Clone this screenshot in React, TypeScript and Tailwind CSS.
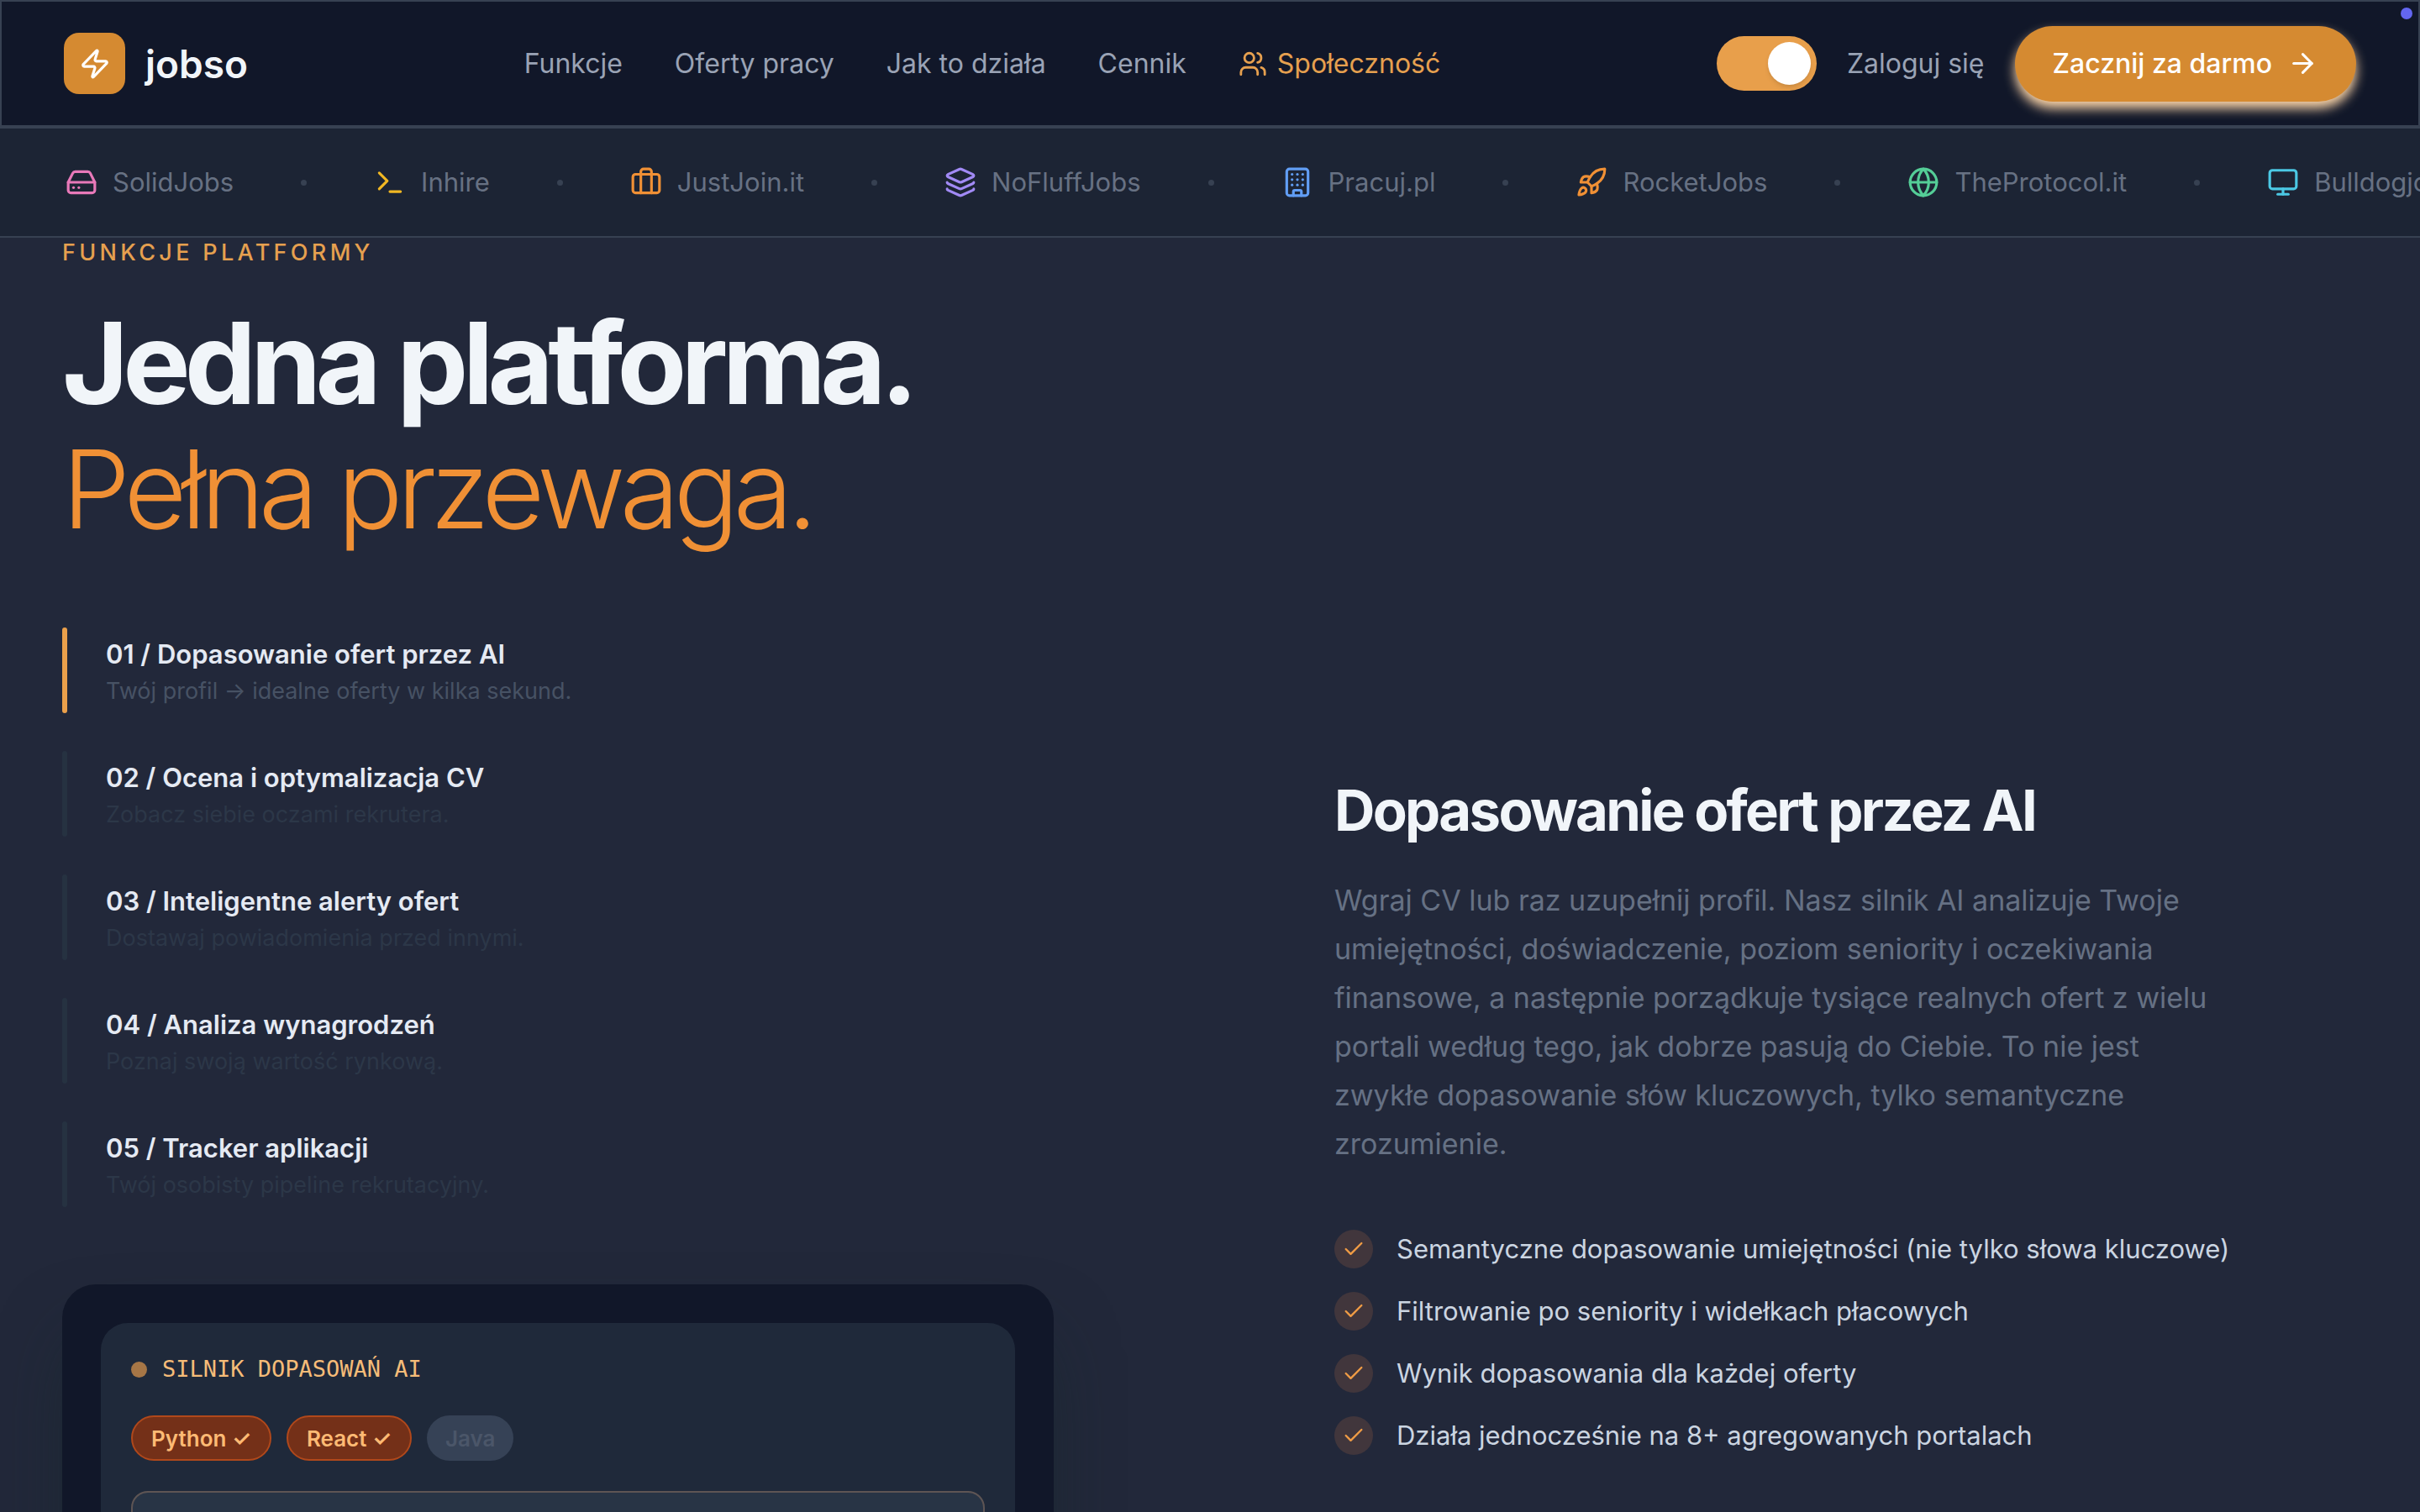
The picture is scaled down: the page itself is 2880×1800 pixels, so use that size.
import React from 'react';
import { ArrowRight, Briefcase, Building, Check, Globe, HardDrive, Layers, Monitor, Rocket, Terminal, Users, Zap } from 'lucide-react';

const navLinks = ['Funkcje', 'Oferty pracy', 'Jak to działa', 'Cennik'];

const portals = [
  { name: 'SolidJobs', icon: <HardDrive size={38} />, color: 'text-[#e879b9]' },
  { name: 'Inhire', icon: <Terminal size={38} />, color: 'text-[#f0b723]' },
  { name: 'JustJoin.it', icon: <Briefcase size={38} />, color: 'text-[#f09035]' },
  { name: 'NoFluffJobs', icon: <Layers size={38} />, color: 'text-[#a18af5]' },
  { name: 'Pracuj.pl', icon: <Building size={38} />, color: 'text-[#619ef5]' },
  { name: 'RocketJobs', icon: <Rocket size={38} />, color: 'text-[#f09035]' },
  { name: 'TheProtocol.it', icon: <Globe size={38} />, color: 'text-[#54cd97]' },
  { name: 'Bulldogjob', icon: <Monitor size={38} />, color: 'text-[#4bc8e4]' },
];

const features = [
  { title: '01 / Dopasowanie ofert przez AI', desc: 'Twój profil → idealne oferty w kilka sekund.' },
  { title: '02 / Ocena i optymalizacja CV', desc: 'Zobacz siebie oczami rekrutera.' },
  { title: '03 / Inteligentne alerty ofert', desc: 'Dostawaj powiadomienia przed innymi.' },
  { title: '04 / Analiza wynagrodzeń', desc: 'Poznaj swoją wartość rynkową.' },
  { title: '05 / Tracker aplikacji', desc: 'Twój osobisty pipeline rekrutacyjny.' },
];

const benefits = [
  'Semantyczne dopasowanie umiejętności (nie tylko słowa kluczowe)',
  'Filtrowanie po seniority i widełkach płacowych',
  'Wynik dopasowania dla każdej oferty',
  'Działa jednocześnie na 8+ agregowanych portalach',
];

const Header: React.FC = () => (
  <header className="relative flex h-[151px] items-center justify-between border-2 border-[#374152] bg-[#111729] px-[74px]">
    <a href="#" className="flex items-center gap-6">
      <span className="flex size-[73px] items-center justify-center rounded-[18px] bg-[#d58a31] text-white">
        <Zap size={38} />
      </span>
      <span className="text-[46px] leading-none font-semibold text-[#f1f5f9]">jobso</span>
    </a>

    <nav className="flex items-center gap-[62px] text-[32px] text-[#9aa3b5]">
      {navLinks.map((label) => (
        <a key={label} href="#">{label}</a>
      ))}
      <a href="#" className="flex items-center gap-3 text-[#e6a04f]">
        <Users size={34} />
        Społeczność
      </a>
    </nav>

    <div className="flex items-center gap-9">
      <input
        type="checkbox"
        role="switch"
        aria-label="Ciemny motyw"
        defaultChecked
        className="relative h-[65px] w-[119px] appearance-none rounded-full bg-[#e89f4b] before:absolute before:top-[7px] before:right-[7px] before:size-[51px] before:rounded-full before:bg-white before:shadow-md"
      />
      <a href="#" className="text-[32px] text-[#9aa3b5]">Zaloguj się</a>
      <button className="flex h-[90px] items-center gap-[18px] rounded-full bg-[#d58a31] px-[45px] text-[32px] font-medium text-white shadow-[0_8px_14px_#fed7aa]">
        Zacznij za darmo
        <ArrowRight size={37} />
      </button>
    </div>
    <span className="absolute top-[7px] right-[7px] size-[14px] rounded-full bg-[#6366f1]"></span>
  </header>
);

const Ticker: React.FC = () => (
  <div className="flex h-[132px] items-center gap-20 overflow-hidden border-y-2 border-[#374152] bg-[#1c2434] px-[78px]">
    {portals.map((portal, idx) => (
      <React.Fragment key={portal.name}>
        {idx > 0 && <span className="size-[7px] shrink-0 rounded-full bg-[#374152]"></span>}
        <span className="flex shrink-0 items-center gap-[18px] text-[31px] text-[#677183]">
          <span className={portal.color}>{portal.icon}</span>
          {portal.name}
        </span>
      </React.Fragment>
    ))}
  </div>
);

const MatchCard: React.FC = () => (
  <div className="h-[600px] max-w-[1180px] rounded-[40px] bg-[#111729] p-[46px] shadow-[0_50px_90px_-20px_rgba(20,40,40,0.6)]">
    <div className="h-full rounded-[32px] bg-[#1f293a] px-9 pt-9">
      <div className="flex items-center gap-[18px]">
        <span className="size-[19px] rounded-full bg-[#a67646]"></span>
        <span className="font-['DejaVu_Sans_Mono',monospace] text-[27px] leading-[38px] text-[#f5bc78]">SILNIK DOPASOWAŃ AI</span>
      </div>
      <div className="mt-9 flex gap-[18px] text-[26px] font-semibold">
        <span className="flex h-[54px] items-center rounded-full border-2 border-[#b0481b] bg-[#743018] px-[22px] text-[#fdba74]">Python ✓</span>
        <span className="flex h-[54px] items-center rounded-full border-2 border-[#b0481b] bg-[#743018] px-[22px] text-[#fdba74]">React ✓</span>
        <span className="flex h-[54px] items-center rounded-full bg-[#364256] px-[22px] text-[#4b5669]">Java</span>
      </div>
      <div className="mt-9 h-[300px] rounded-[20px] border-2 border-[#5e5554] bg-[#283445]"></div>
    </div>
  </div>
);

export default function App() {
  return (
    <div className="h-screen overflow-hidden bg-[#22283a] font-['Inter',sans-serif]">
      <Header />
      <Ticker />
      <main className="grid grid-cols-2 gap-[296px] px-[74px]">
        <section>
          <p className="text-[27px] leading-9 font-medium tracking-[0.16em] text-[#e6a04f] uppercase">Funkcje platformy</p>
          <h1 className="mt-[38px] text-[135px] leading-[150px] font-bold tracking-[-0.05em] whitespace-nowrap text-[#f1f5f9]">
            Jedna platforma.
            <span className="block text-[129px] font-light text-[#f09035]">Pełna przewaga.</span>
          </h1>
          <ul className="mt-[90px] flex flex-col gap-[45px]">
            {features.map((feature, idx) => (
              <li key={feature.title} className="flex h-[102px] gap-[46px]">
                <span className={`w-[6px] rounded-full ${idx === 0 ? 'bg-[#eba04b]' : 'bg-[#263241]'}`}></span>
                <button className="flex flex-col justify-end pb-1 text-left">
                  <span className="text-[31px] leading-[44px] font-semibold text-[#e5eaf3]">{feature.title}</span>
                  <span className={`text-[27px] leading-[44px] ${idx === 0 ? 'text-[#475264]' : 'text-[#2c3748]'}`}>{feature.desc}</span>
                </button>
              </li>
            ))}
          </ul>
          <div className="mt-[92px]">
            <MatchCard />
          </div>
        </section>

        <section className="pt-[640px]">
          <h2 className="text-[67px] leading-[84px] font-bold tracking-[-0.04em] whitespace-nowrap text-[#f1f5f9]">Dopasowanie ofert przez AI</h2>
          <p className="mt-9 max-w-[1070px] text-[34px] leading-[58px] text-[#667184]">
            Wgraj CV lub raz uzupełnij profil. Nasz silnik AI analizuje Twoje umiejętności, doświadczenie, poziom seniority i oczekiwania finansowe, a następnie porządkuje tysiące realnych ofert z wielu portali według tego, jak dobrze pasują do Ciebie. To nie jest zwykłe dopasowanie słów kluczowych, tylko semantyczne zrozumienie.
          </p>
          <ul className="mt-[73px] flex flex-col gap-7">
            {benefits.map((benefit) => (
              <li key={benefit} className="flex h-[46px] items-center gap-7 text-[31px] text-[#cbd5e1]">
                <span className="flex size-[46px] items-center justify-center rounded-full bg-[#41363c] text-[#f09c45]">
                  <Check size={28} />
                </span>
                {benefit}
              </li>
            ))}
          </ul>
        </section>
      </main>
    </div>
  );
}
